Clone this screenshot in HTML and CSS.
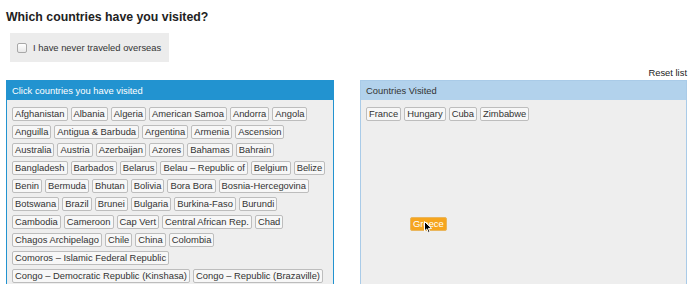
FILE: index.html
```html
<!DOCTYPE html>
<html lang="en">
<head>
  <meta charset="UTF-8" />
  <title>Which countries have you visited?</title>
  <link rel="stylesheet" href="styles.css">
</head>
<body>
  <h1>Which countries have you visited?</h1>

  <label class="never">
    <input type="checkbox" class="never-box">
    <span>I have never traveled overseas</span>
  </label>

  <div class="reset"><a href="#" class="reset-link">Reset list</a></div>

  <div class="panels">
    <div class="panel">
      <div class="panel-head">Click countries you have visited</div>
      <div class="panel-body">
        <span class="tag">Afghanistan</span>
        <span class="tag">Albania</span>
        <span class="tag">Algeria</span>
        <span class="tag">American Samoa</span>
        <span class="tag">Andorra</span>
        <span class="tag">Angola</span>
        <span class="tag">Anguilla</span>
        <span class="tag">Antigua &amp; Barbuda</span>
        <span class="tag">Argentina</span>
        <span class="tag">Armenia</span>
        <span class="tag">Ascension</span>
        <span class="tag">Australia</span>
        <span class="tag">Austria</span>
        <span class="tag">Azerbaijan</span>
        <span class="tag">Azores</span>
        <span class="tag">Bahamas</span>
        <span class="tag">Bahrain</span>
        <span class="tag">Bangladesh</span>
        <span class="tag">Barbados</span>
        <span class="tag">Belarus</span>
        <span class="tag">Belau – Republic of</span>
        <span class="tag">Belgium</span>
        <span class="tag">Belize</span>
        <span class="tag">Benin</span>
        <span class="tag">Bermuda</span>
        <span class="tag">Bhutan</span>
        <span class="tag">Bolivia</span>
        <span class="tag">Bora Bora</span>
        <span class="tag">Bosnia-Hercegovina</span>
        <span class="tag">Botswana</span>
        <span class="tag">Brazil</span>
        <span class="tag">Brunei</span>
        <span class="tag">Bulgaria</span>
        <span class="tag">Burkina-Faso</span>
        <span class="tag">Burundi</span>
        <span class="tag">Cambodia</span>
        <span class="tag">Cameroon</span>
        <span class="tag">Cap Vert</span>
        <span class="tag">Central African Rep.</span>
        <span class="tag">Chad</span>
        <span class="tag">Chagos Archipelago</span>
        <span class="tag">Chile</span>
        <span class="tag">China</span>
        <span class="tag">Colombia</span>
        <span class="tag">Comoros – Islamic Federal Republic</span>
        <span class="tag">Congo – Democratic Republic (Kinshasa)</span>
        <span class="tag">Congo – Republic (Brazaville)</span>
      </div>
    </div>

    <div class="panel visited">
      <div class="panel-head">Countries Visited</div>
      <div class="panel-body">
        <span class="tag">France</span>
        <span class="tag">Hungary</span>
        <span class="tag">Cuba</span>
        <span class="tag">Zimbabwe</span>
      </div>

      <!-- tag being dragged -->
      <span class="tag drag">Greece</span>
      <svg class="cursor" width="9" height="13" viewBox="0 0 9 13">
        <path d="M0.5 0.5 L0.5 10 L2.8 7.9 L4.4 11.8 L6 11.1 L4.4 7.4 L7.6 7.4 Z" fill="#000" stroke="#fff" stroke-width="1"/>
      </svg>
    </div>
  </div>
</body>
</html>
```

FILE: styles.css
```css
html, body {
  margin: 0;
  padding: 0;
}

body {
  padding: 9px 0 0 6px;
  font-family: "Liberation Sans", Arial, sans-serif;
  font-size: 9.4px;
  color: #333;
  background: #fff;
}

h1 {
  margin: 0 0 8px;
  font-size: 12.3px;
  line-height: 16px;
  color: #222;
}

.never {
  display: inline-flex;
  align-items: center;
  gap: 6px;
  height: 29px;
  margin-left: 4px;
  padding: 0 8px 0 7px;
  background: #ececec;
  color: #333;
}

.never-box {
  appearance: none;
  -webkit-appearance: none;
  width: 10px;
  height: 10px;
  margin: 0;
  border: 1px solid #a8a8a8;
  border-radius: 2px;
  background: linear-gradient(#fff, #e8e8e8);
}

.reset {
  width: 681px;
  margin: 5px 0 1px;
  line-height: 12px;
  text-align: right;
}

.reset-link {
  color: #222;
  text-decoration: none;
}

.panels {
  display: grid;
  grid-template-columns: 328px 327px;
  gap: 26px;
}

.panel {
  position: relative;
  height: 220px;
  border: 1px solid #2293d0;
  border-bottom: none;
  background: #eee;
}

.panel-head {
  padding: 0 5px;
  line-height: 19px;
  background: #2293d0;
  color: #fff;
}

.panel-body {
  display: flex;
  flex-wrap: wrap;
  align-content: flex-start;
  gap: 4px 3px;
  padding: 7px 5px 6px;
}

.tag {
  padding: 0 2px;
  line-height: 12px;
  border: 1px solid #bdbdbd;
  border-radius: 2px;
  background: #f7f7f7;
  color: #333;
  white-space: nowrap;
}

/* правая панель */
.visited {
  border-color: #a9cbe8;
}

.visited .panel-head {
  background: #b2d2ec;
  color: #333;
}

.tag.drag {
  position: absolute;
  left: 49px;
  top: 136px;
  border-color: #e9b65e;
  background: #f6a51e;
  color: #fff;
}

.cursor {
  position: absolute;
  left: 63px;
  top: 140px;
}
```
